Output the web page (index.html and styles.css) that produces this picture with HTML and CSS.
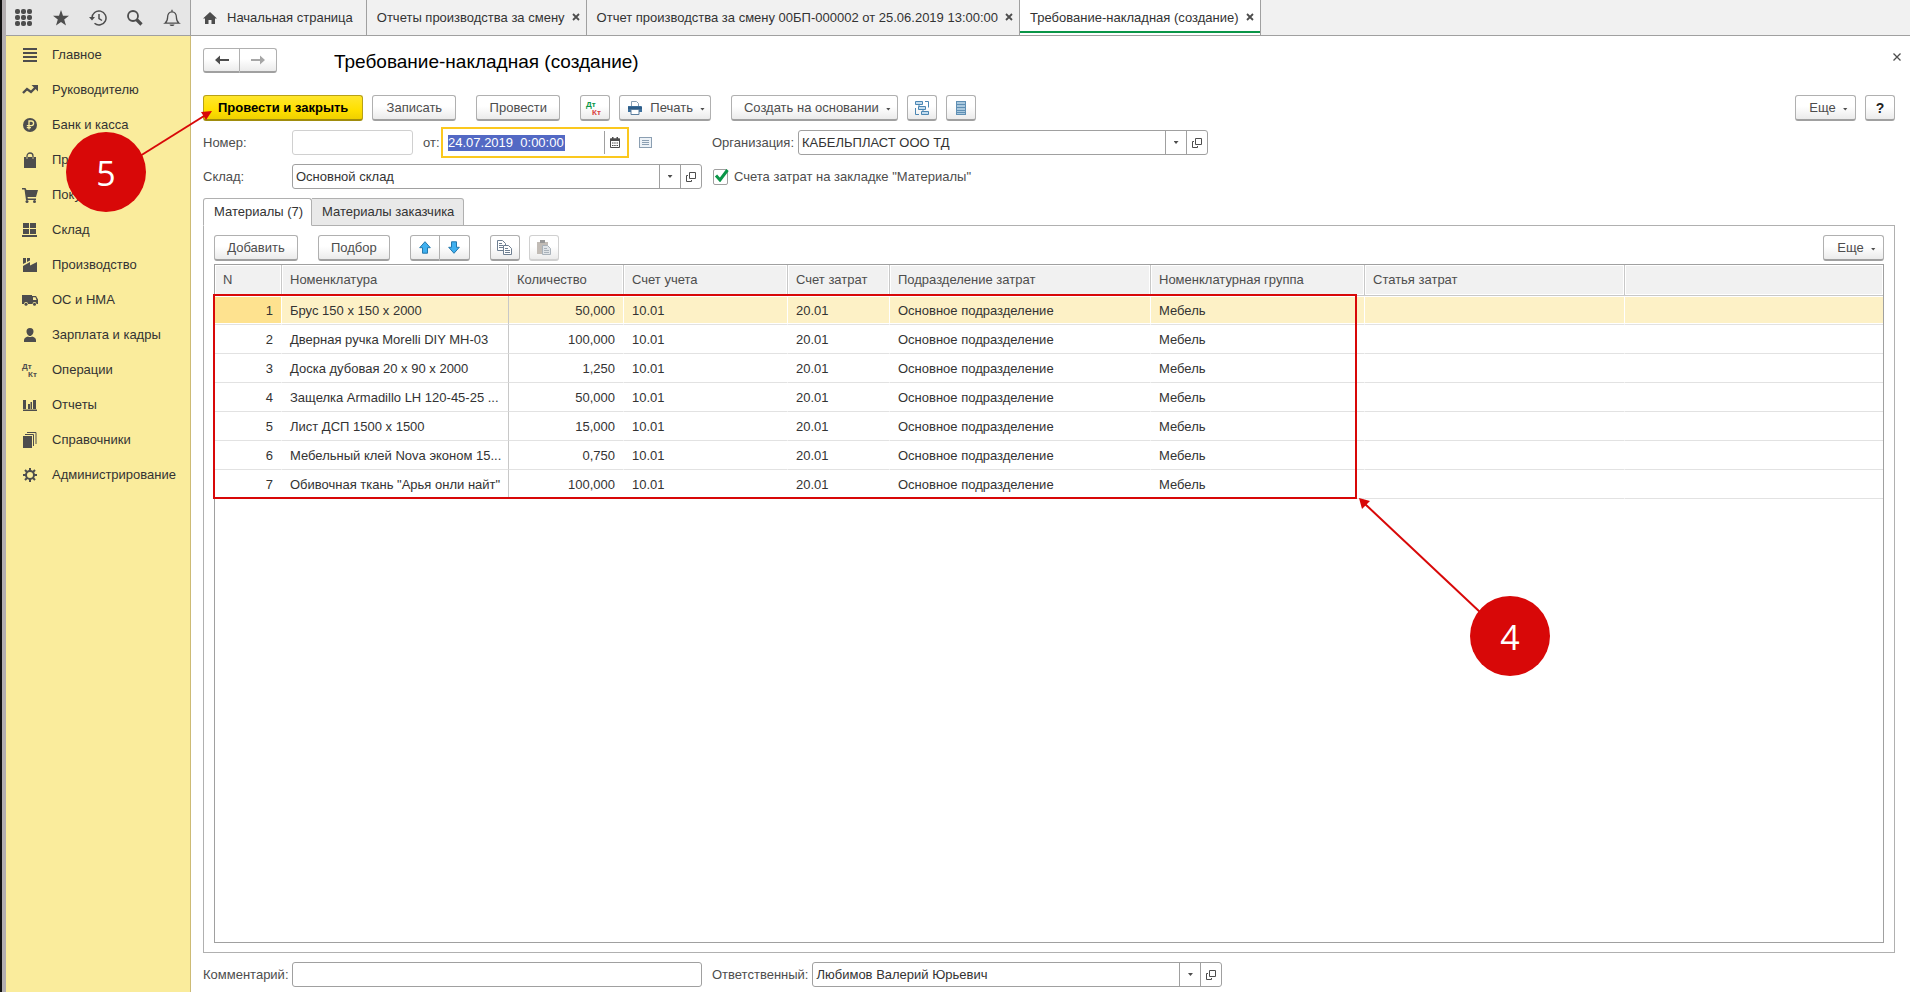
FILE: index.html
```html
<!DOCTYPE html>
<html lang="ru">
<head>
<meta charset="utf-8">
<title>Требование-накладная (создание)</title>
<link rel="stylesheet" href="styles.css">
</head>
<body>
<div class="app">
  <header class="topbar">
    <div class="tools">
      <button class="tool" aria-label="Меню функций"><svg width="18" height="18" viewBox="0 0 18 18"><g fill="#4d4d4d"><rect x="0" y="0" width="5" height="5" rx="2"/><rect x="6" y="0" width="5" height="5" rx="2"/><rect x="12" y="0" width="5" height="5" rx="2"/><rect x="0" y="6" width="5" height="5" rx="2"/><rect x="6" y="6" width="5" height="5" rx="2"/><rect x="12" y="6" width="5" height="5" rx="2"/><rect x="0" y="12" width="5" height="5" rx="2"/><rect x="6" y="12" width="5" height="5" rx="2"/><rect x="12" y="12" width="5" height="5" rx="2"/></g></svg></button>
      <button class="tool" aria-label="Избранное"><svg width="18" height="18" viewBox="0 0 18 18"><path fill="#4d4d4d" d="M9 1l2 5.800h6l-4.800 3.800 1.800 6-5-3.500-5 3.500 1.800-6L1 6.800h6z"/></svg></button>
      <button class="tool" aria-label="История"><svg width="18" height="18" viewBox="0 0 18 18" fill="none" stroke="#4d4d4d" stroke-width="1.500"><path d="M3 9a7 7 0 1 1 2.500 5.300"/><path d="M10 5v4.500l3 2"/><path d="M0 8h6L3 11.500z" fill="#4d4d4d" stroke="none"/></svg></button>
      <button class="tool" aria-label="Поиск"><svg width="18" height="18" viewBox="0 0 18 18" fill="none" stroke="#4d4d4d"><circle cx="7" cy="7" r="5" stroke-width="1.800"/><path d="M10.500 10.500L15.500 15.500" stroke-width="3.200"/></svg></button>
      <button class="tool" aria-label="Уведомления"><svg width="18" height="18" viewBox="0 0 18 18" fill="none" stroke="#4d4d4d" stroke-width="1.300"><path d="M9 .8v2M2 14.200h14c-2-1.500-2.600-3.200-2.600-6 0-3-1.600-5.400-4.400-5.400S4.600 5.200 4.600 8.200c0 2.800-.6 4.500-2.600 6z"/><path d="M6.500 15.500h5c-.5 2-4.500 2-5 0z" fill="#4d4d4d" stroke="none"/></svg></button>
    </div>
    <nav class="windows">
      <a class="window window-home" href="#"><svg width="14" height="12" viewBox="0 0 14 12"><path fill="#4d4d4d" d="M7 0l7 6.500h-2V12H8.500V8h-3v4H2V6.500H0z"/></svg>Начальная страница</a>
      <div class="window"><a href="#">Отчеты производства за смену</a><button class="close" aria-label="Закрыть"><svg width="8" height="8" viewBox="0 0 8 8"><path d="M1 1l6 6M7 1L1 7" stroke="#4d4d4d" stroke-width="1.800"/></svg></button></div>
      <div class="window"><a href="#">Отчет производства за смену 00БП-000002 от 25.06.2019 13:00:00</a><button class="close" aria-label="Закрыть"><svg width="8" height="8" viewBox="0 0 8 8"><path d="M1 1l6 6M7 1L1 7" stroke="#4d4d4d" stroke-width="1.800"/></svg></button></div>
      <div class="window window-active"><a href="#">Требование-накладная (создание)</a><button class="close" aria-label="Закрыть"><svg width="8" height="8" viewBox="0 0 8 8"><path d="M1 1l6 6M7 1L1 7" stroke="#4d4d4d" stroke-width="1.800"/></svg></button></div>
    </nav>
  </header>

  <nav class="sidebar">
    <a href="#"><svg width="16" height="16" viewBox="0 0 16 16"><path fill="#4d4d4d" d="M1 1h14v2H1zM1 5h14v2H1zM1 9h14v2H1zM1 13h14v2H1z"/></svg>Главное</a>
    <a href="#"><svg width="16" height="16" viewBox="0 0 16 16"><path d="M1 11l4-4 4 3 4.500-4.500" fill="none" stroke="#4d4d4d" stroke-width="2.400"/><path d="M9.500 3H16v6.500z" fill="#4d4d4d"/></svg>Руководителю</a>
    <a href="#"><svg width="16" height="16" viewBox="0 0 16 16"><circle cx="8" cy="8" r="7" fill="#4d4d4d"/><path d="M7 12.500V4h2.300a2.300 2.300 0 0 1 0 4.600H4.800M4.800 10.600H9" fill="none" stroke="#faec9c" stroke-width="1.300"/></svg>Банк и касса</a>
    <a href="#"><svg width="16" height="16" viewBox="0 0 16 16"><path fill="#4d4d4d" d="M2 5h2v2h2V5h4v2h2V5h2v11H2z"/><path d="M5 7V4a3 3 0 0 1 6 0v3" fill="none" stroke="#4d4d4d" stroke-width="1.300"/></svg>Продажи</a>
    <a href="#"><svg width="16" height="16" viewBox="0 0 16 16"><path fill="#4d4d4d" d="M0 1h3.500l1 2H16l-2 7H5.500l.4 1.500H14V13H4L2.500 2.500H0z"/><circle cx="5" cy="14.500" r="1.500" fill="#4d4d4d"/><circle cx="12.500" cy="14.500" r="1.500" fill="#4d4d4d"/></svg>Покупки</a>
    <a href="#"><svg width="16" height="16" viewBox="0 0 16 16"><path fill="#4d4d4d" d="M1 1h6v5H1zM8 1h6v5H8zM1 7h6v5H1zM8 7h6v5H8zM0 13h15v2H0z"/></svg>Склад</a>
    <a href="#"><svg width="16" height="16" viewBox="0 0 16 16"><path fill="#4d4d4d" d="M1 15V9l7-4v3.500L15 5v10zM1 1h3v4.500L1 7zM5 1h3v2.500L5 5z"/></svg>Производство</a>
    <a href="#"><svg width="16" height="16" viewBox="0 0 16 16"><path fill="#4d4d4d" d="M0 3h10v1h4l2 3.500V12h-1.500a2 2 0 0 0-4 0H6a2 2 0 0 0-4 0H0z"/><path fill="#faec9c" d="M11 5.300h2.500L14.500 8H11z"/><circle cx="4" cy="12.300" r="1.500" fill="#4d4d4d"/><circle cx="12.500" cy="12.300" r="1.500" fill="#4d4d4d"/></svg>ОС и НМА</a>
    <a href="#"><svg width="16" height="16" viewBox="0 0 16 16"><path fill="#4d4d4d" d="M8 1c2.500 0 3.500 1.500 3.500 3.500S10 9 8 9 4.500 6.500 4.500 4.500 5.500 1 8 1zM2 15v-2c0-2 2-3 4-3.500 1 .8 3 .8 4 0 2 .5 4 1.500 4 3.500v2z"/></svg>Зарплата и кадры</a>
    <a href="#"><svg width="16" height="16" viewBox="0 0 16 16" class="dtkt"><text x="0" y="7" fill="#4d4d4d">Дт</text><text x="6" y="15" fill="#4d4d4d">Кт</text></svg>Операции</a>
    <a href="#"><svg width="16" height="16" viewBox="0 0 16 16"><path fill="#4d4d4d" d="M1 3h3v9H1zM6 7h2v5H6zM8.500 5H10v7H8.500zM11 3h3v9h-3zM1 12.500h14V14H1z"/></svg>Отчеты</a>
    <a href="#"><svg width="16" height="16" viewBox="0 0 16 16"><path fill="#4d4d4d" d="M1 4h9v12H1z"/><path d="M3 2.500h8.500V14M5 .5h9V12" fill="none" stroke="#4d4d4d"/></svg>Справочники</a>
    <a href="#"><svg width="16" height="16" viewBox="0 0 16 16"><circle cx="8" cy="8" r="4" fill="none" stroke="#4d4d4d" stroke-width="2"/><path d="M8 1v3M8 12v3M1 8h3M12 8h3M3 3l2 2M11 11l2 2M3 13l2-2M11 5l2-2" stroke="#4d4d4d" stroke-width="2"/></svg>Администрирование</a>
  </nav>

  <main class="form">
    <div class="heading">
      <div class="group">
        <button class="btn" aria-label="Назад"><svg width="14" height="10" viewBox="0 0 14 10"><path fill="#4d4d4d" d="M0 5l5-4.500V4h9v2H5v3.500z"/></svg></button>
        <button class="btn" aria-label="Вперед"><svg width="14" height="10" viewBox="0 0 14 10"><path fill="#a6a6a6" d="M14 5L9 .5V4H0v2h9v3.500z"/></svg></button>
      </div>
      <h1>Требование-накладная (создание)</h1>
      <button class="close close-form" aria-label="Закрыть форму"><svg width="8" height="8" viewBox="0 0 8 8"><path d="M.5.5l7 7M7.500.5l-7 7" stroke="#4d4d4d" stroke-width="1.300"/></svg></button>
    </div>

    <div class="commands">
      <button class="btn btn-primary">Провести и закрыть</button>
      <button class="btn btn-wide">Записать</button>
      <button class="btn btn-wide gap-wide">Провести</button>
      <button class="btn btn-icon gap-wide" aria-label="Проводки"><svg width="18" height="16" viewBox="0 0 18 16" class="dtkt"><text x="0" y="7" fill="#0a9648">Дт</text><text x="6" y="15" fill="#d9403c">Кт</text></svg></button>
      <button class="btn btn-print"><svg width="16" height="16" viewBox="0 0 16 16"><path d="M4.500 6V1.500h5l2 2V6" fill="#fff" stroke="#8aa0b4"/><path d="M1 6h13a1 1 0 0 1 1 1v5H1z" fill="#3c6f9c"/><path d="M1 8h14" stroke="#214d74"/><path d="M4 9.500h8v5H4z" fill="#fff" stroke="#5c7f9f"/></svg>Печать<span class="caret"></span></button>
      <button class="btn btn-menu gap-wide">Создать на основании<span class="caret"></span></button>
      <button class="btn btn-icon" aria-label="Структура подчиненности"><svg width="16" height="16" viewBox="0 0 16 16" fill="none" stroke="#4c87b3"><path d="M1.500 1.500h7v3h-7zM4.500 6.500h7v3h-7zM7.500 11.500h7v3h-7z" fill="#c3dcee"/><path d="M5 4.500v2M9 9.500v2M11 1.500h3.500v6M1.500 8v6.500H5"/></svg></button>
      <button class="btn btn-icon" aria-label="Список"><svg width="12" height="16" viewBox="0 0 12 16"><rect x="1.500" y="1.500" width="9" height="13" fill="#a9c8de" stroke="#5f8fb4"/><path d="M1 4.500h10M1 7.500h10M1 10.500h10M1 12.500h10" stroke="#5f8fb4"/></svg></button>
      <button class="btn btn-menu to-right">Еще<span class="caret"></span></button>
      <button class="btn btn-icon btn-help">?</button>
    </div>

    <div class="fields">
      <div class="left">
        <label class="name" for="number">Номер:</label>
        <input class="box box-number" id="number" type="text">
        <label class="from" for="date">от:</label>
        <div class="date"><input id="date" type="text" value="24.07.2019&nbsp; 0:00:00"><button aria-label="Календарь"><svg width="10" height="11" viewBox="0 0 10 11"><path d="M.5 2h9v8.500h-9z" fill="#fff" stroke="#4d4d4d"/><path d="M0 1.500h10V4H0zM2 0h1.500v2H2zM6.500 0H8v2H6.500z" fill="#4d4d4d"/><path d="M2 6h1.500M4.200 6h1.500M6.500 6H8M2 8.500h1.500M4.200 8.500h1.500M6.500 8.500H8" stroke="#4d4d4d"/></svg></button></div>
        <svg class="note" width="14" height="12" viewBox="0 0 14 12"><rect x=".5" y=".5" width="12" height="10" fill="#edf2f7" stroke="#8b9fb2"/><path d="M3 3.500h7M3 5.500h7M3 7.500h7" stroke="#8b9fb2"/></svg>
      </div>
      <div class="right">
        <label for="org">Организация:</label>
        <div class="box combo"><input id="org" type="text" value="КАБЕЛЬПЛАСТ ООО ТД"><button aria-label="Выбрать"><span class="caret"></span></button><button aria-label="Открыть"><svg width="10" height="10" viewBox="0 0 10 10" fill="none" stroke="#4d4d4d"><path d="M3.500.5h6v6h-6zM2 3.500H.5v6h5V8"/></svg></button></div>
      </div>
      <div class="left">
        <label class="name" for="store">Склад:</label>
        <div class="box combo"><input id="store" type="text" value="Основной склад"><button aria-label="Выбрать"><span class="caret"></span></button><button aria-label="Открыть"><svg width="10" height="10" viewBox="0 0 10 10" fill="none" stroke="#4d4d4d"><path d="M3.500.5h6v6h-6zM2 3.500H.5v6h5V8"/></svg></button></div>
      </div>
      <div class="right">
        <span class="check"><input id="accounts" type="checkbox" checked><svg width="15" height="13" viewBox="0 0 15 13"><path d="M2 6.500l4 4.500L13.500 1" fill="none" stroke="#0a9648" stroke-width="3"/></svg></span>
        <label for="accounts">Счета затрат на закладке "Материалы"</label>
      </div>
    </div>

    <div class="tabs">
      <button class="tab tab-active">Материалы (7)</button>
      <button class="tab">Материалы заказчика</button>
    </div>
    <section class="panel">
      <div class="commands">
        <button class="btn btn-wide">Добавить</button>
        <button class="btn gap-wide">Подбор</button>
        <div class="group gap-wide">
          <button class="btn btn-icon" aria-label="Вверх"><svg width="12" height="13" viewBox="0 0 12 13"><path d="M6 .7l5.300 6H8.500v5.500h-5V6.700H.7z" fill="#3fb0f0" stroke="#2378ac"/></svg></button>
          <button class="btn btn-icon" aria-label="Вниз"><svg width="12" height="13" viewBox="0 0 12 13"><path d="M6 12.300l5.300-6H8.500V.8h-5v5.500H.7z" fill="#3fb0f0" stroke="#2378ac"/></svg></button>
        </div>
        <button class="btn btn-icon gap-wide" aria-label="Копировать"><svg width="16" height="16" viewBox="0 0 16 16" fill="#fff" stroke="#6e7f91"><path d="M.5.500h5l3 3v7h-8z"/><path d="M2 3.500h3M2 5.500h4M2 7.500h4"/><path d="M6.500 5.500h5l3 3v6h-8z"/><path d="M8 8.500h3M8 10.500h5M8 12.500h5"/></svg></button>
        <button class="btn btn-icon btn-off" aria-label="Вставить" disabled><svg width="16" height="16" viewBox="0 0 16 16"><path d="M1 2h11v12H1z" fill="#c2bcb6"/><path d="M4 0h5v3H4z" fill="#989898"/><path d="M6.500 5.500h5l3 3v6h-8z" fill="#e0e4e8" stroke="#a9b2ba"/><path d="M8 8.500h3M8 10.500h5M8 12.500h5" stroke="#a9b2ba"/></svg></button>
        <button class="btn btn-menu to-right">Еще<span class="caret"></span></button>
      </div>
      <div class="grid">
        <table>
          <colgroup><col class="c-n"><col class="c-item"><col class="c-qty"><col class="c-acc"><col class="c-cost"><col class="c-dept"><col class="c-group"><col class="c-art"><col></colgroup>
          <thead><tr><th>N</th><th>Номенклатура</th><th>Количество</th><th>Счет учета</th><th>Счет затрат</th><th>Подразделение затрат</th><th>Номенклатурная группа</th><th>Статья затрат</th><th></th></tr></thead>
          <tbody>
            <tr class="selected"><td>1</td><td>Брус 150 х 150 х 2000</td><td>50,000</td><td>10.01</td><td>20.01</td><td>Основное подразделение</td><td>Мебель</td><td></td><td></td></tr>
            <tr><td>2</td><td>Дверная ручка Morelli DIY MH-03</td><td>100,000</td><td>10.01</td><td>20.01</td><td>Основное подразделение</td><td>Мебель</td><td></td><td></td></tr>
            <tr><td>3</td><td>Доска дубовая 20 х 90 х 2000</td><td>1,250</td><td>10.01</td><td>20.01</td><td>Основное подразделение</td><td>Мебель</td><td></td><td></td></tr>
            <tr><td>4</td><td>Защелка Armadillo LH 120-45-25 ...</td><td>50,000</td><td>10.01</td><td>20.01</td><td>Основное подразделение</td><td>Мебель</td><td></td><td></td></tr>
            <tr><td>5</td><td>Лист ДСП 1500 х 1500</td><td>15,000</td><td>10.01</td><td>20.01</td><td>Основное подразделение</td><td>Мебель</td><td></td><td></td></tr>
            <tr><td>6</td><td>Мебельный клей Nova эконом 15...</td><td>0,750</td><td>10.01</td><td>20.01</td><td>Основное подразделение</td><td>Мебель</td><td></td><td></td></tr>
            <tr><td>7</td><td>Обивочная ткань "Арья онли найт"</td><td>100,000</td><td>10.01</td><td>20.01</td><td>Основное подразделение</td><td>Мебель</td><td></td><td></td></tr>
          </tbody>
        </table>
      </div>
    </section>

    <div class="fields">
      <div class="left">
        <label class="name" for="comment">Комментарий:</label>
        <input class="box box-comment" id="comment" type="text">
      </div>
      <div class="right">
        <label for="person">Ответственный:</label>
        <div class="box combo"><input id="person" type="text" value="Любимов Валерий Юрьевич"><button aria-label="Выбрать"><span class="caret"></span></button><button aria-label="Открыть"><svg width="10" height="10" viewBox="0 0 10 10" fill="none" stroke="#4d4d4d"><path d="M3.500.5h6v6h-6zM2 3.500H.5v6h5V8"/></svg></button></div>
      </div>
    </div>
  </main>

  <div class="frame"></div>
  <svg class="arrows" width="1600" height="700" viewBox="0 0 1600 700">
    <g fill="none" stroke="#d80808" stroke-width="2"><path d="M140 156L204 116"/><path d="M1481 613L1365 504"/></g>
    <g fill="#d80808"><path d="M212 111l-6 9-5-8z"/><path d="M1359 498l11 3-8 8z"/></g>
  </svg>
  <div class="marker marker-five">5</div>
  <div class="marker marker-four">4</div>
</div>
</body>
</html>
```

FILE: styles.css
```css
* { box-sizing: border-box; }
body {
  margin: 0;
  font: 13px/16px "Liberation Sans", Arial, sans-serif;
  color: #333;
  background: #fff;
}
a { color: inherit; text-decoration: none; }
button, input { font: inherit; color: inherit; margin: 0; }
button { background: none; border: 0; padding: 0; }
input { border: 0; padding: 0; min-width: 0; background: none; outline: 0; }
svg { display: block; flex: none; }

.app {
  position: relative;
  display: grid;
  grid-template-columns: 185px minmax(0, 1fr);
  grid-template-rows: 36px minmax(0, 1fr);
  min-height: 100vh;
  border-left: 6px solid #b3aeb0;
}
.app::before {
  content: "";
  position: absolute;
  left: -6px;
  top: 0;
  bottom: 0;
  width: 2px;
  background: #111;
}

.topbar {
  grid-column: 1 / -1;
  display: flex;
  background: #f1f1f1;
  border-bottom: 1px solid #a0a0a0;
}
.tools {
  display: flex;
  align-items: center;
  width: 185px;
  background: #e6e6e6;
  border-right: 1px solid #a0a0a0;
}
.tool {
  display: flex;
  justify-content: center;
  width: 37px;
}
.windows { display: flex; }
.window {
  display: flex;
  align-items: center;
  gap: 7px;
  padding: 0 6px 0 10px;
  border-right: 1px solid #a0a0a0;
}
.window-home { gap: 10px; padding: 0 13px 0 12px; }
.window-active { background: #fff; box-shadow: inset 0 -2px #fff, inset 0 -4px #0a9648, inset 3px 0 #fff; }
.window .close { margin-bottom: 2px; }

.sidebar {
  padding-top: 1px;
  background: #faec9c;
  border-right: 1px solid #cdbb75;
}
.sidebar a {
  display: flex;
  align-items: center;
  gap: 14px;
  height: 35px;
  padding-left: 16px;
}
.dtkt { overflow: visible; font: bold 8px "Liberation Sans", Arial, sans-serif; }

.form {
  display: flex;
  flex-direction: column;
  padding: 12px 15px 5px 12px;
}
.heading { display: flex; align-items: center; height: 25px; }
.heading h1 {
  margin: 2px 0 0 57px;
  font-size: 19px;
  line-height: 24px;
  font-weight: normal;
  color: #000;
}
.close-form { align-self: flex-start; margin: 5px -6px 0 auto; }

.btn {
  display: flex;
  align-items: center;
  justify-content: center;
  height: 26px;
  padding: 0 12px;
  color: #4d4d4d;
  background: linear-gradient(#fff 45%, #ebebeb);
  border: 1px solid #b0b0b0;
  border-bottom: 2px solid #a0a0a0;
  border-radius: 3px;
}
.btn-wide { min-width: 84px; }
.btn-primary {
  padding: 0 14px;
  font-weight: bold;
  color: #000;
  background: linear-gradient(#ffe62e, #ffe000 60%, #efd000);
  border-color: #b8a116;
  border-bottom-color: #a08c0c;
}
.btn-icon { width: 30px; padding: 0; }
.btn-print { gap: 7px; padding: 0 5px 0 7px; }
.btn-menu { gap: 7px; min-width: 61px; padding: 0 6px 0 12px; }
.btn-help { font-weight: bold; font-size: 14px; color: #222; }
.btn-off { border-color: #d0d0d0; }
.caret {
  width: 5px;
  height: 3px;
  background: #4d4d4d;
  clip-path: polygon(0 0, 100% 0, 50% 100%);
}
.btn .caret { margin-top: 3px; }
.group { display: flex; }
.group .btn { width: 37px; padding: 0; height: 25px; }
.group .btn:first-child { border-radius: 3px 0 0 3px; }
.group .btn:last-child { border-left: 0; border-radius: 0 3px 3px 0; }
.panel .group .btn { width: 30px; height: 26px; }

.commands { display: flex; gap: 9px; margin-top: 22px; }
.gap-wide { margin-left: 11px; }
.to-right { margin-left: auto; }

.fields {
  display: grid;
  grid-template-columns: 500px minmax(0, 1fr);
  column-gap: 9px;
  row-gap: 9px;
  margin-top: 9px;
  color: #4d4d4d;
}
.left, .right { display: flex; align-items: center; height: 25px; }
.name { width: 89px; flex: none; }
.box {
  height: 25px;
  background: #fff;
  border: 1px solid #a0a0a0;
  border-radius: 3px;
  color: #333;
}
.box-number { width: 121px; border-color: #d0d0d0; }
.box-comment { width: 410px; padding: 0 4px; }
.from { margin: 0 3px 0 10px; width: 15px; }
.date {
  display: flex;
  align-items: center;
  width: 188px;
  height: 31px;
  padding: 0 2px 0 5px;
  border: 2px solid #fbc81e;
  background: #fff;
}
.date input { width: 117px; height: 16px; color: #fff; background: #5369c4; }
.date button {
  display: flex;
  align-items: center;
  margin-left: auto;
  width: 21px;
  height: 23px;
  padding-left: 5px;
  border-left: 1px solid #a0a0a0;
}
.note { margin-left: 10px; }
.combo { display: flex; width: 410px; }
.combo input { flex: 1; padding-left: 3px; }
.combo button {
  display: flex;
  align-items: center;
  justify-content: center;
  width: 21px;
  border-left: 1px solid #a0a0a0;
}
.right label { margin-right: 4px; }
.check { position: relative; display: flex; margin: 0 6px 0 1px; }
.check input {
  appearance: none;
  width: 15px;
  height: 16px;
  border: 1px solid #a0a0a0;
  border-radius: 2px;
}
.check svg { position: absolute; left: 1px; top: 0; }

.tabs {
  display: flex;
  position: relative;
  margin: 9px 0 -1px;
}
.tab {
  height: 28px;
  padding: 0 9px 0 10px;
  background: #e9e9e9;
  border: 1px solid #b0b0b0;
  border-left: 0;
  border-radius: 0 3px 0 0;
}
.tab-active {
  padding-right: 8px;
  background: #fff;
  border-left: 1px solid #b0b0b0;
  border-bottom-color: #fff;
  border-radius: 3px 3px 0 0;
}
.panel {
  flex: 1;
  display: flex;
  flex-direction: column;
  padding: 9px 10px 9px;
  border: 1px solid #b0b0b0;
}
.panel .commands { margin: 0 0 3px; }
.grid { flex: 1; border: 1px solid #a0a0a0; }
table {
  width: 100%;
  table-layout: fixed;
  border-collapse: separate;
  border-spacing: 0;
}
.c-n { width: 67px; }
.c-item { width: 227px; }
.c-qty { width: 115px; }
.c-acc { width: 164px; }
.c-cost { width: 102px; }
.c-dept { width: 261px; }
.c-group { width: 214px; }
.c-art { width: 260px; }
th, td {
  padding: 0 8px;
  text-align: left;
  white-space: nowrap;
  overflow: hidden;
  border-right: 1px solid transparent;
}
th {
  height: 31px;
  font-weight: normal;
  color: #4d4d4d;
  background: #f1f1f1;
  border-right-color: #c8c8c8;
  border-bottom: 1px solid #c8c8c8;
  box-shadow: inset 0 0 0 1px #fff;
}
td { height: 29px; padding-top: 2px; border-bottom: 1px solid #e2e2e2; }
th:last-child, td:last-child { border-right: 0; }
td:nth-child(1), td:nth-child(3) { text-align: right; }
td:nth-child(2) { padding-right: 4px; border-right-color: #c8c8c8; }
.selected td {
  background: #fdf1c6;
  border-right-color: #fff;
  box-shadow: inset 0 1px #fff, inset 0 -1px #fff;
}
.selected td:first-child { background: #fee28f; }
.selected td:nth-child(2) { border-right-color: #c8c8c8; }

.frame {
  position: absolute;
  left: 207px;
  top: 294px;
  width: 1144px;
  height: 205px;
  border: 2px solid #d80808;
  pointer-events: none;
}
.arrows { position: absolute; left: -6px; top: 0; pointer-events: none; }
.marker {
  position: absolute;
  width: 80px;
  height: 80px;
  border-radius: 50%;
  background: #d80808;
  color: #fff;
  font: 500 34px/82px "Open Sans", "Noto Sans", sans-serif;
  text-align: center;
}
.marker-five { left: 60px; top: 132px; }
.marker-four { left: 1464px; top: 596px; }
```
